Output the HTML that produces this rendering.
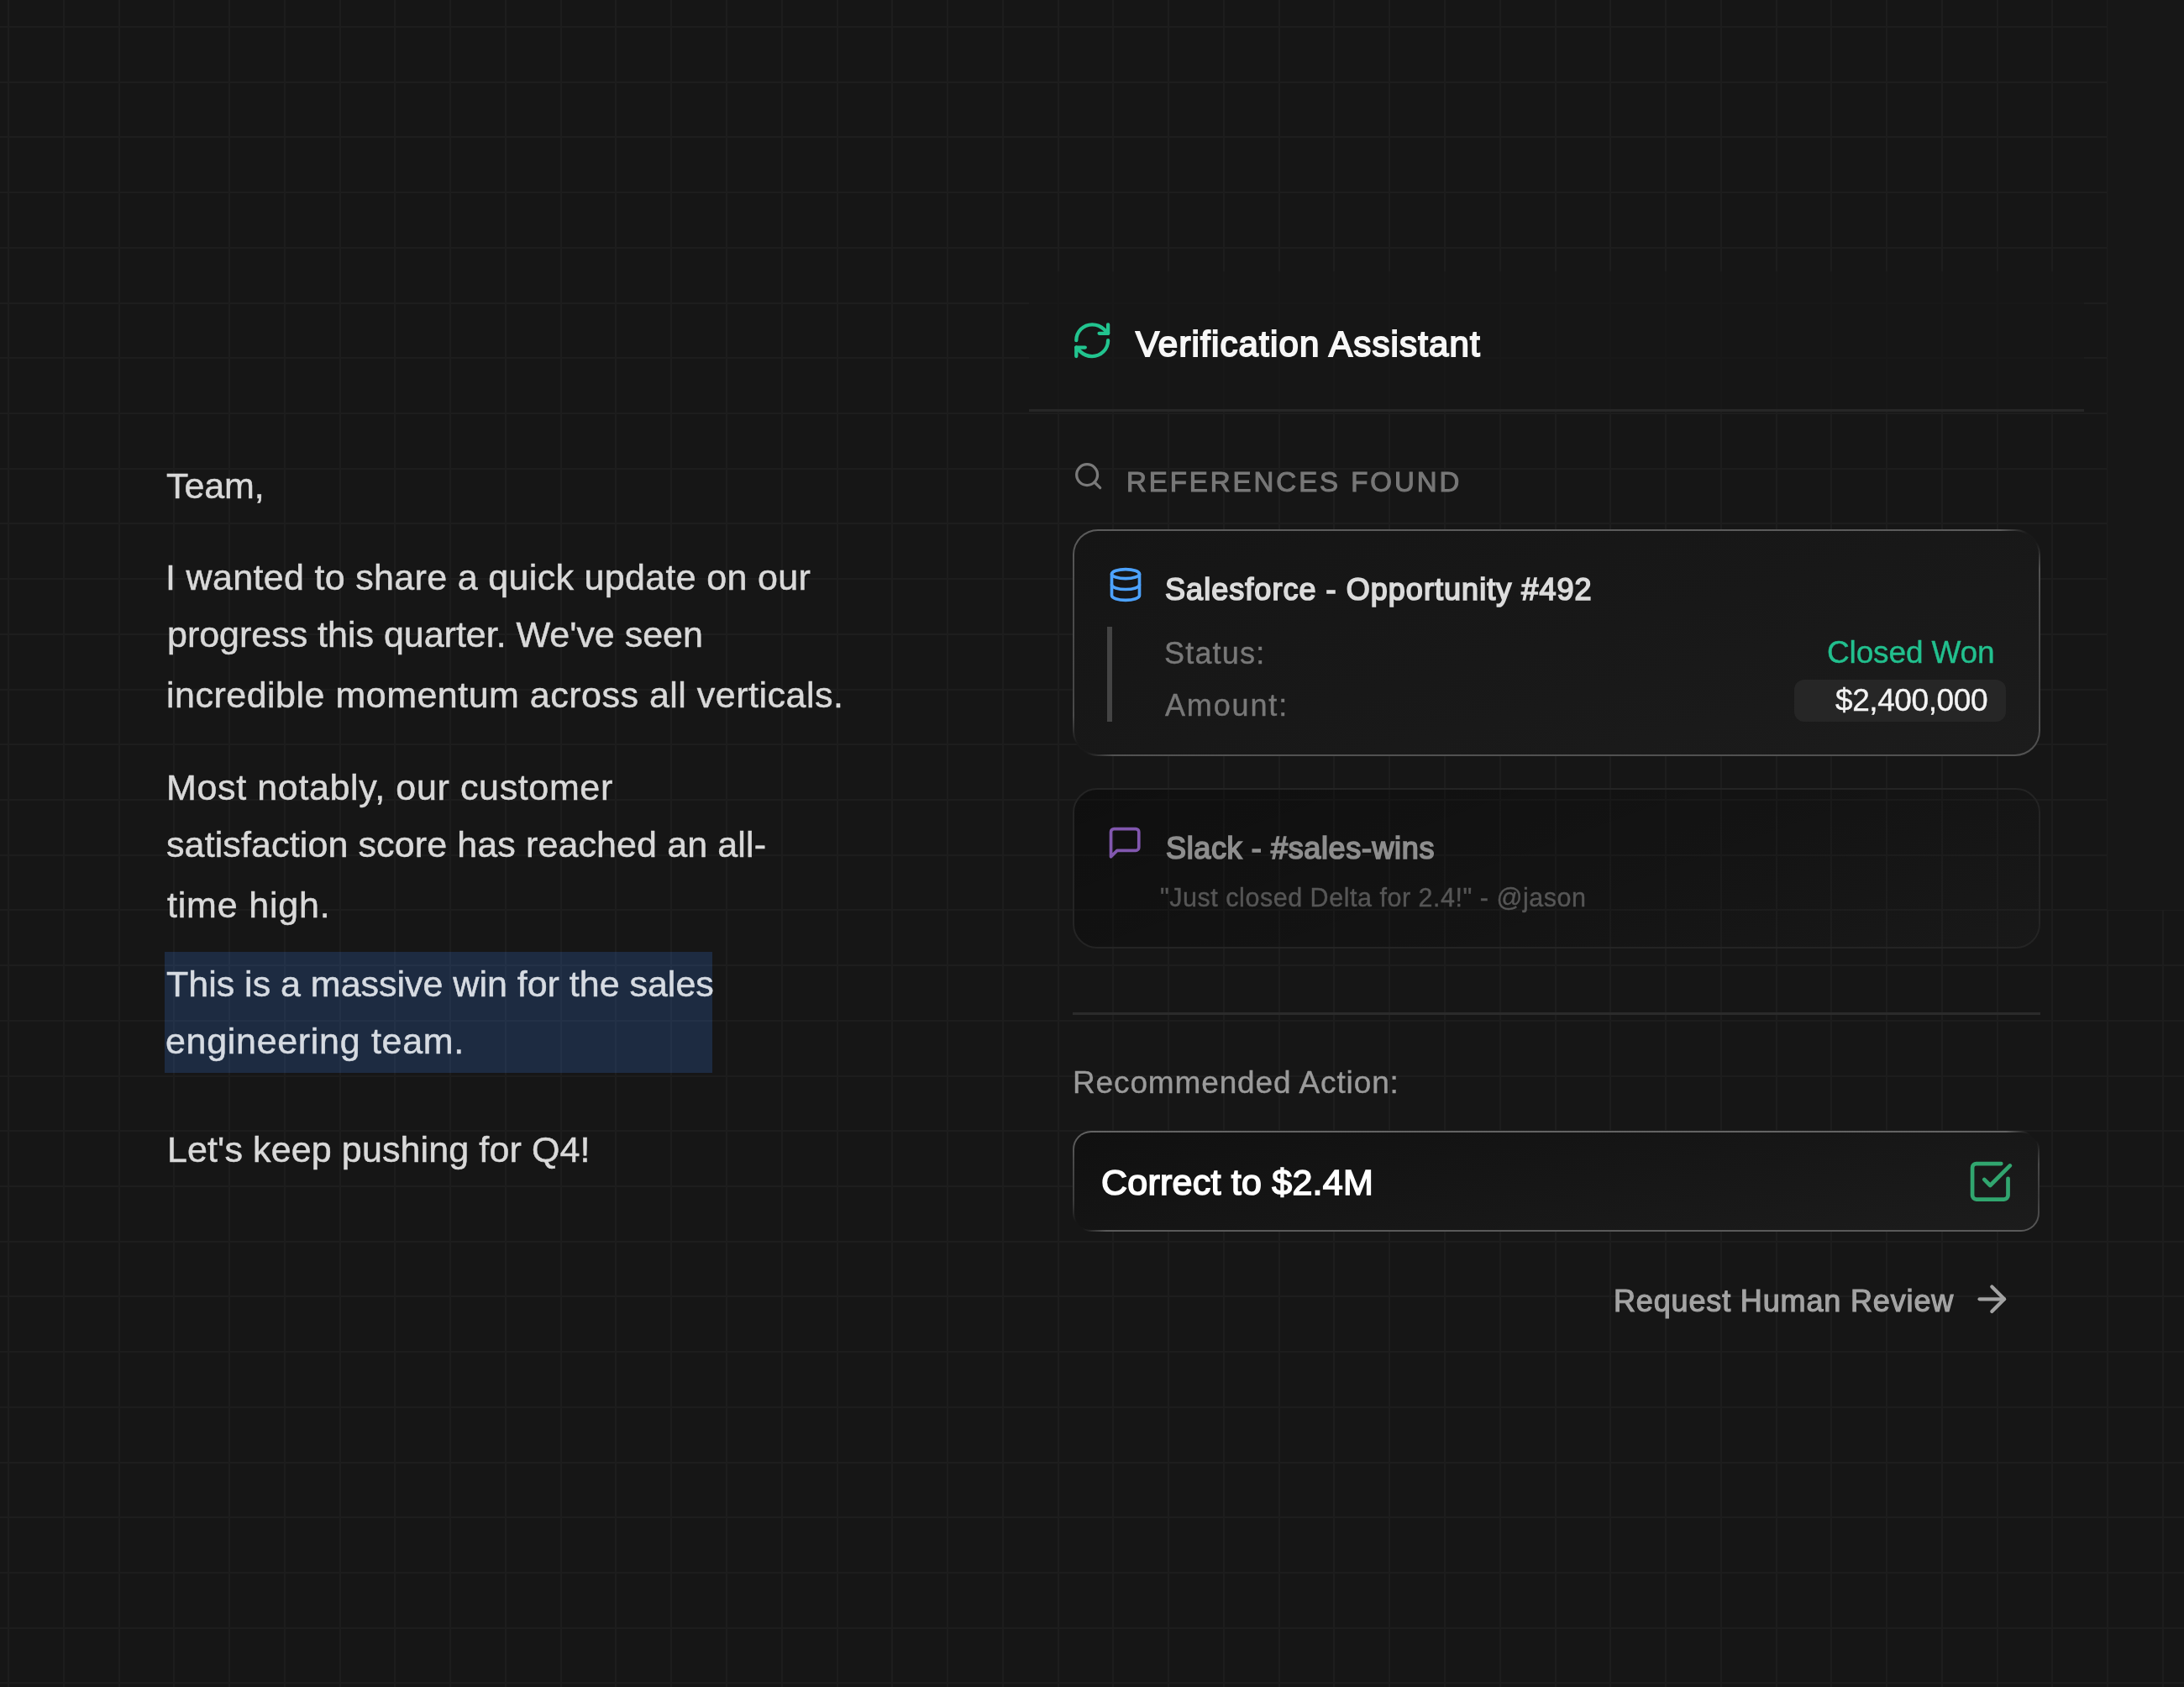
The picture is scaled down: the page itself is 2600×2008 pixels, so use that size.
<!DOCTYPE html>
<html><head><meta charset="utf-8"><style>
html,body{margin:0;padding:0;}
body{width:2600px;height:2008px;overflow:hidden;background:#161616;position:relative;font-family:"Liberation Sans",sans-serif;}
.gv{position:absolute;width:2px;background:#1d1d1d;}
.gh{position:absolute;height:2px;background:#1d1d1d;}
.t{position:absolute;white-space:pre;will-change:transform;}
.ic{position:absolute;overflow:visible;}
.box{position:absolute;box-sizing:border-box;}
</style></head><body>
<div class="gv" style="left:9.0px;top:0;height:2008px"></div><div class="gv" style="left:74.7px;top:0;height:2008px"></div><div class="gv" style="left:140.5px;top:0;height:2008px"></div><div class="gv" style="left:206.3px;top:0;height:2008px"></div><div class="gv" style="left:272.0px;top:0;height:2008px"></div><div class="gv" style="left:337.8px;top:0;height:2008px"></div><div class="gv" style="left:403.6px;top:0;height:2008px"></div><div class="gv" style="left:469.3px;top:0;height:2008px"></div><div class="gv" style="left:535.1px;top:0;height:2008px"></div><div class="gv" style="left:600.9px;top:0;height:2008px"></div><div class="gv" style="left:666.7px;top:0;height:2008px"></div><div class="gv" style="left:732.4px;top:0;height:2008px"></div><div class="gv" style="left:798.2px;top:0;height:2008px"></div><div class="gv" style="left:864.0px;top:0;height:2008px"></div><div class="gv" style="left:929.7px;top:0;height:2008px"></div><div class="gv" style="left:995.5px;top:0;height:2008px"></div><div class="gv" style="left:1061.3px;top:0;height:2008px"></div><div class="gv" style="left:1127.0px;top:0;height:2008px"></div><div class="gv" style="left:1192.8px;top:0;height:2008px"></div><div class="gv" style="left:1258.6px;top:0;height:2008px"></div><div class="gv" style="left:1324.4px;top:0;height:2008px"></div><div class="gv" style="left:1390.1px;top:0;height:2008px"></div><div class="gv" style="left:1455.9px;top:0;height:2008px"></div><div class="gv" style="left:1521.7px;top:0;height:2008px"></div><div class="gv" style="left:1587.4px;top:0;height:2008px"></div><div class="gv" style="left:1653.2px;top:0;height:2008px"></div><div class="gv" style="left:1719.0px;top:0;height:2008px"></div><div class="gv" style="left:1784.8px;top:0;height:2008px"></div><div class="gv" style="left:1850.5px;top:0;height:2008px"></div><div class="gv" style="left:1916.3px;top:0;height:2008px"></div><div class="gv" style="left:1982.1px;top:0;height:2008px"></div><div class="gv" style="left:2047.8px;top:0;height:2008px"></div><div class="gv" style="left:2113.6px;top:0;height:2008px"></div><div class="gv" style="left:2179.4px;top:0;height:2008px"></div><div class="gv" style="left:2245.1px;top:0;height:2008px"></div><div class="gv" style="left:2310.9px;top:0;height:2008px"></div><div class="gv" style="left:2376.7px;top:0;height:2008px"></div><div class="gv" style="left:2442.4px;top:0;height:2008px"></div><div class="gv" style="left:2508.2px;top:0;height:2008px"></div><div class="gv" style="left:2574.0px;top:1083px;height:925px"></div><div class="gh" style="top:31.0px;left:0;width:2510px"></div><div class="gh" style="top:96.7px;left:0;width:2510px"></div><div class="gh" style="top:162.4px;left:0;width:2510px"></div><div class="gh" style="top:228.1px;left:0;width:2510px"></div><div class="gh" style="top:293.8px;left:0;width:2510px"></div><div class="gh" style="top:359.5px;left:0;width:2510px"></div><div class="gh" style="top:425.3px;left:0;width:2510px"></div><div class="gh" style="top:491.0px;left:0;width:2510px"></div><div class="gh" style="top:556.7px;left:0;width:2510px"></div><div class="gh" style="top:622.4px;left:0;width:2510px"></div><div class="gh" style="top:688.1px;left:0;width:2510px"></div><div class="gh" style="top:753.8px;left:0;width:2510px"></div><div class="gh" style="top:819.5px;left:0;width:2510px"></div><div class="gh" style="top:885.2px;left:0;width:2510px"></div><div class="gh" style="top:950.9px;left:0;width:2510px"></div><div class="gh" style="top:1016.6px;left:0;width:2510px"></div><div class="gh" style="top:1082.4px;left:0;width:2600px"></div><div class="gh" style="top:1148.1px;left:0;width:2600px"></div><div class="gh" style="top:1213.8px;left:0;width:2600px"></div><div class="gh" style="top:1279.5px;left:0;width:2600px"></div><div class="gh" style="top:1345.2px;left:0;width:2600px"></div><div class="gh" style="top:1410.9px;left:0;width:2600px"></div><div class="gh" style="top:1476.6px;left:0;width:2600px"></div><div class="gh" style="top:1542.3px;left:0;width:2600px"></div><div class="gh" style="top:1608.0px;left:0;width:2600px"></div><div class="gh" style="top:1673.7px;left:0;width:2600px"></div><div class="gh" style="top:1739.5px;left:0;width:2600px"></div><div class="gh" style="top:1805.2px;left:0;width:2600px"></div><div class="gh" style="top:1870.9px;left:0;width:2600px"></div><div class="gh" style="top:1936.6px;left:0;width:2600px"></div><div class="gh" style="top:2002.3px;left:0;width:2600px"></div>
<div class="box" style="left:2509px;top:0;width:91px;height:1083px;background:#171717"></div>
<div class="box" style="left:1225px;top:323px;width:1256px;height:164px;background:rgba(23,23,23,0.75)"></div>
<div class="box" style="left:1225px;top:487px;width:1256px;height:3px;background:#262626"></div>
<div class="box" style="left:196px;top:1133px;width:652px;height:144px;background:rgba(58,128,238,0.2)"></div>
<div class="box" style="left:1277px;top:630px;width:1152px;height:270px;border-radius:30px;border:2.5px solid transparent;background:linear-gradient(165deg,#151515 0%,#181818 50%,#1c1c1c 100%) padding-box,radial-gradient(circle at 100% 0%,#191919 0px,#191919 16px,rgba(25,25,25,0) 48px) border-box,radial-gradient(circle at 0% 100%,#191919 0px,#191919 16px,rgba(25,25,25,0) 48px) border-box,linear-gradient(180deg,#5c5c5c 0%,#4c4c4c 30%,#464646 70%,#525252 100%) border-box"></div>
<div class="box" style="left:1317.5px;top:746px;width:6px;height:113px;background:#444"></div>
<div class="box" style="left:2136px;top:809px;width:252px;height:50px;border-radius:12px;background:#262626"></div>
<div class="box" style="left:1277px;top:938px;width:1152px;height:191px;border-radius:29px;border:2.5px solid #242424;background:linear-gradient(160deg,rgba(0,0,0,0.32) 0%,rgba(0,0,0,0.12) 55%,rgba(255,255,255,0.01) 100%)"></div>
<div class="box" style="left:1277px;top:1205px;width:1152px;height:2.5px;background:#2b2b2b"></div>
<div class="box" style="left:1277px;top:1346px;width:1151px;height:120px;border-radius:22px;border:2.5px solid transparent;background:linear-gradient(170deg,#101010 0%,#161616 50%,#1c1c1c 100%) padding-box,radial-gradient(circle at 100% 0%,#161616 0px,#161616 12px,rgba(22,22,22,0) 40px) border-box,radial-gradient(circle at 0% 100%,#161616 0px,#161616 12px,rgba(22,22,22,0) 40px) border-box,linear-gradient(180deg,#646464 0%,#4a4a4a 30%,#3c3c3c 65%,#5a5a5a 100%) border-box"></div>
<svg class="ic" style="left:1274.80px;top:380.40px;width:50.40px;height:50.40px" viewBox="0 0 24 24" fill="none" stroke="#22c48f" stroke-width="2.05" stroke-linecap="round" stroke-linejoin="round"><path d="M3 12a9 9 0 0 1 9-9 9.75 9.75 0 0 1 6.74 2.74L21 8"/><path d="M21 3v5h-5"/><path d="M21 12a9 9 0 0 1-9 9 9.75 9.75 0 0 1-6.74-2.74L3 16"/><path d="M8 16H3v5"/></svg><svg class="ic" style="left:1277.00px;top:548.30px;width:37.35px;height:37.35px" viewBox="0 0 24 24" fill="none" stroke="#7a7a7a" stroke-width="2.1" stroke-linecap="round" stroke-linejoin="round"><circle cx="11" cy="11" r="8"/><path d="m21 21-4.3-4.3"/></svg><svg class="ic" style="left:1317.50px;top:673.90px;width:44.00px;height:44.00px" viewBox="0 0 24 24" fill="none" stroke="#4da3ff" stroke-width="2" stroke-linecap="round" stroke-linejoin="round"><ellipse cx="12" cy="5" rx="9" ry="3"/><path d="M3 5V19A9 3 0 0 0 21 19V5"/><path d="M3 12A9 3 0 0 0 21 12"/></svg><svg class="ic" style="left:1317.20px;top:981.30px;width:44.30px;height:44.30px" viewBox="0 0 24 24" fill="none" stroke="#8157ae" stroke-width="2" stroke-linecap="round" stroke-linejoin="round"><path d="M21 15a2 2 0 0 1-2 2H7l-4 4V5a2 2 0 0 1 2-2h14a2 2 0 0 1 2 2z"/></svg><svg class="ic" style="left:2340.80px;top:1377.90px;width:56.60px;height:56.60px" viewBox="0 0 24 24" fill="none" stroke="#31a66f" stroke-width="2" stroke-linecap="round" stroke-linejoin="round"><path d="M21 10.5V19a2 2 0 0 1-2 2H5a2 2 0 0 1-2-2V5a2 2 0 0 1 2-2h12.5"/><path d="m9 11 3 3L22 4"/></svg><svg class="ic" style="left:2345.50px;top:1521.40px;width:50.60px;height:50.60px" viewBox="0 0 24 24" fill="none" stroke="#a3a3a3" stroke-width="2" stroke-linecap="round" stroke-linejoin="round"><path d="M5 12h14"/><path d="m12 5 7 7-7 7"/></svg>
<div class="t" style="left:197.50px;top:557.30px;font-size:43px;font-weight:400;letter-spacing:-0.075px;color:#d9d9d9;line-height:43px;-webkit-text-stroke:0.5px #d9d9d9;">Team,</div><div class="t" style="left:197.00px;top:666.11px;font-size:43px;font-weight:400;letter-spacing:0.329px;color:#d9d9d9;line-height:43px;-webkit-text-stroke:0.5px #d9d9d9;">I wanted to share a quick update on our</div><div class="t" style="left:199.00px;top:734.01px;font-size:43px;font-weight:400;letter-spacing:-0.016px;color:#d9d9d9;line-height:43px;-webkit-text-stroke:0.5px #d9d9d9;">progress this quarter. We&#39;ve seen</div><div class="t" style="left:197.70px;top:805.71px;font-size:43px;font-weight:400;letter-spacing:0.493px;color:#d9d9d9;line-height:43px;-webkit-text-stroke:0.5px #d9d9d9;">incredible momentum across all verticals.</div><div class="t" style="left:197.70px;top:916.01px;font-size:43px;font-weight:400;letter-spacing:0.632px;color:#d9d9d9;line-height:43px;-webkit-text-stroke:0.5px #d9d9d9;">Most notably, our customer</div><div class="t" style="left:198.20px;top:984.01px;font-size:43px;font-weight:400;letter-spacing:0.111px;color:#d9d9d9;line-height:43px;-webkit-text-stroke:0.5px #d9d9d9;">satisfaction score has reached an all-</div><div class="t" style="left:198.70px;top:1056.30px;font-size:43px;font-weight:400;letter-spacing:0.8px;color:#d9d9d9;line-height:43px;-webkit-text-stroke:0.5px #d9d9d9;">time high.</div><div class="t" style="left:197.70px;top:1150.30px;font-size:43px;font-weight:400;letter-spacing:-0.018px;color:#d6dbe2;line-height:43px;-webkit-text-stroke:0.5px #d6dbe2;">This is a massive win for the sales</div><div class="t" style="left:197.20px;top:1218.40px;font-size:43px;font-weight:400;letter-spacing:0.688px;color:#d6dbe2;line-height:43px;-webkit-text-stroke:0.5px #d6dbe2;">engineering team.</div><div class="t" style="left:198.50px;top:1347.01px;font-size:43px;font-weight:400;letter-spacing:0.112px;color:#d9d9d9;line-height:43px;-webkit-text-stroke:0.5px #d9d9d9;">Let&#39;s keep pushing for Q4!</div><div class="t" style="left:1351.90px;top:388.81px;font-size:42px;font-weight:400;letter-spacing:1.171px;color:#f7f7f7;line-height:42px;-webkit-text-stroke:1.9px #f7f7f7;">Verification Assistant</div><div class="t" style="left:1340.50px;top:557.40px;font-size:33px;font-weight:400;letter-spacing:2.953px;color:#777777;line-height:33px;-webkit-text-stroke:1.1px #777777;">REFERENCES FOUND</div><div class="t" style="left:1386.70px;top:684.10px;font-size:36px;font-weight:400;letter-spacing:1.046px;color:#dcdcdc;line-height:36px;-webkit-text-stroke:1.7px #dcdcdc;">Salesforce - Opportunity #492</div><div class="t" style="left:1386.10px;top:759.60px;font-size:36px;font-weight:400;letter-spacing:1.183px;color:#787878;line-height:36px;-webkit-text-stroke:0.4px #787878;">Status:</div><div class="t" style="left:1387.00px;top:822.00px;font-size:36px;font-weight:400;letter-spacing:1.85px;color:#787878;line-height:36px;-webkit-text-stroke:0.4px #787878;">Amount:</div><div class="t" style="left:2174.50px;top:758.21px;font-size:37px;font-weight:400;letter-spacing:-0.144px;color:#22c08e;line-height:37px;-webkit-text-stroke:0.4px #22c08e;">Closed Won</div><div class="t" style="left:2185.10px;top:815.10px;font-size:37px;font-weight:400;letter-spacing:-0.411px;color:#f2f2f2;line-height:37px;-webkit-text-stroke:0.4px #f2f2f2;">$2,400,000</div><div class="t" style="left:1387.60px;top:992.00px;font-size:36px;font-weight:400;letter-spacing:0.628px;color:#8e8e8e;line-height:36px;-webkit-text-stroke:1.7px #8e8e8e;">Slack - #sales-wins</div><div class="t" style="left:1380.90px;top:1052.91px;font-size:30.5px;font-weight:400;letter-spacing:0.519px;color:#565656;line-height:30.5px;-webkit-text-stroke:0.4px #565656;">&quot;Just closed Delta for 2.4!&quot; - @jason</div><div class="t" style="left:1276.50px;top:1270.31px;font-size:37px;font-weight:400;letter-spacing:0.867px;color:#9a9a9a;line-height:37px;-webkit-text-stroke:0.4px #9a9a9a;">Recommended Action:</div><div class="t" style="left:1311.20px;top:1386.01px;font-size:43px;font-weight:400;letter-spacing:0.233px;color:#ffffff;line-height:43px;-webkit-text-stroke:1.6px #ffffff;">Correct to $2.4M</div><div class="t" style="left:1921.10px;top:1531.00px;font-size:36px;font-weight:400;letter-spacing:0.847px;color:#a3a3a3;line-height:36px;-webkit-text-stroke:1.2px #a3a3a3;">Request Human Review</div>
</body></html>
